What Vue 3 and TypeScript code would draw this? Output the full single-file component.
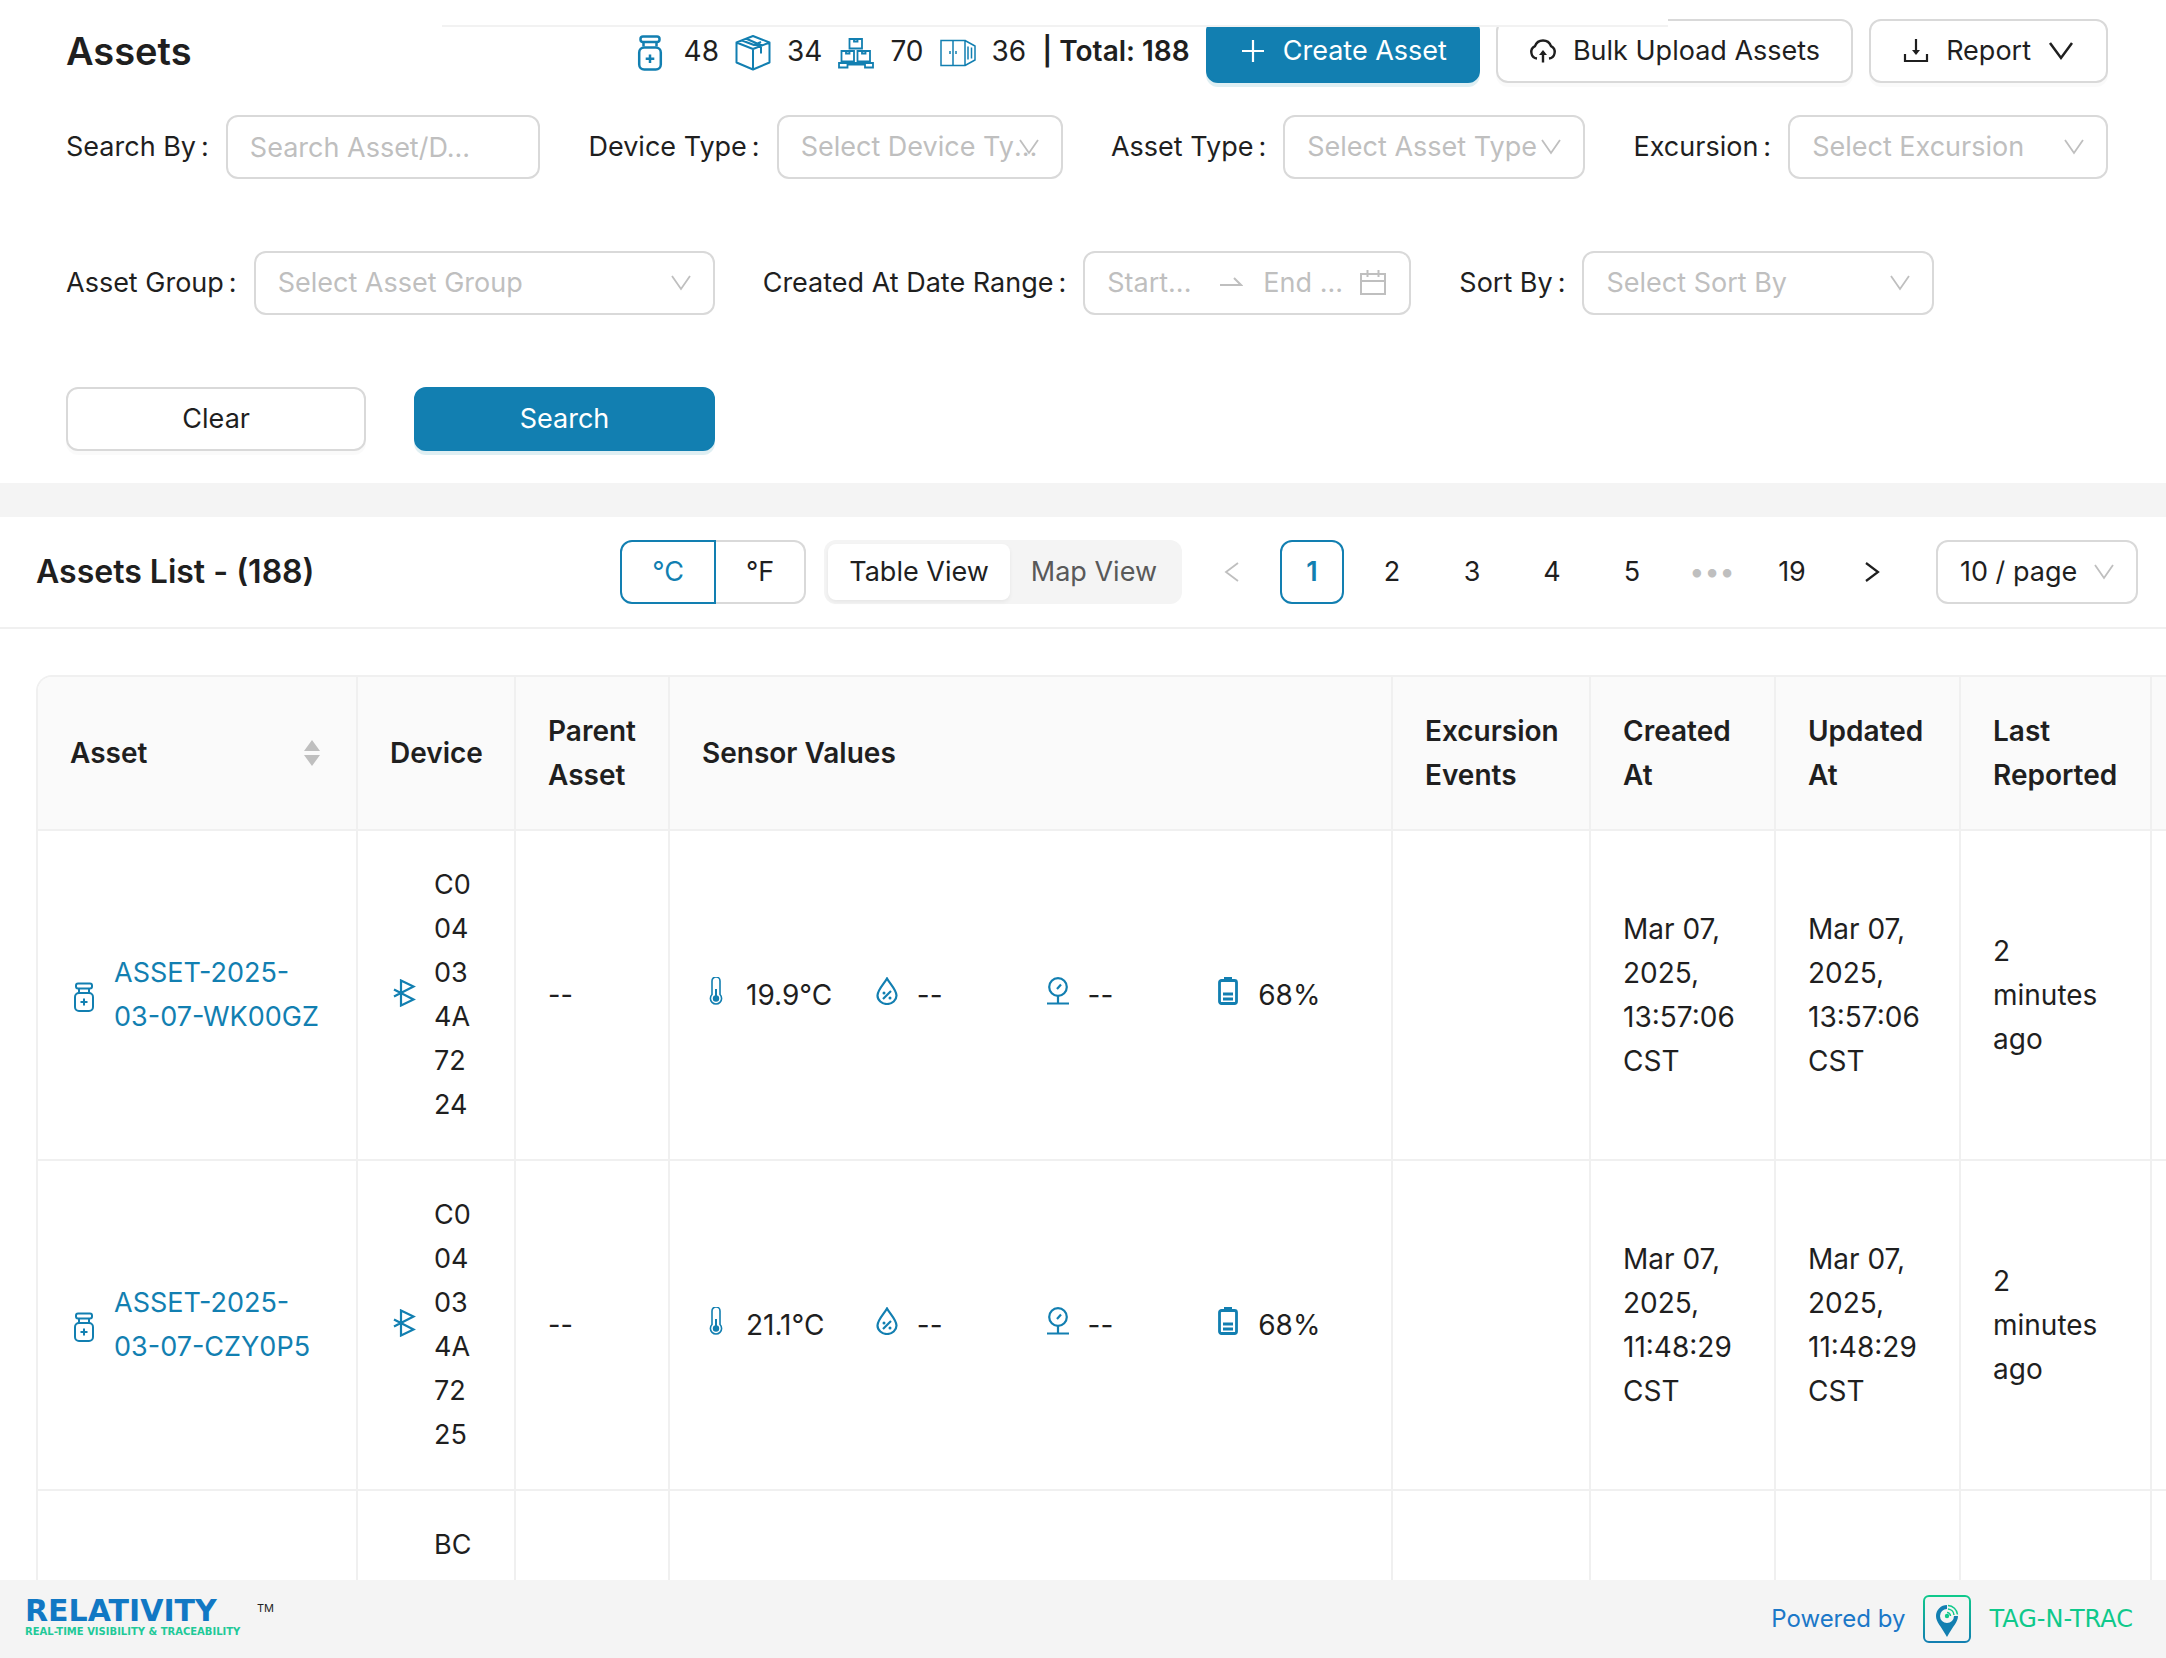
<script setup lang="ts">
import { ref } from 'vue'

interface FilterField {
  id: string
  label: string
  placeholder: string
  span: string
  kind: 'text' | 'select' | 'range'
}

interface AssetRow {
  name: string[]
  device: string[]
  parent: string
  temperature: string
  humidity: string
  pressure: string
  battery: string
  created: string[]
  updated: string[]
  reported: string[]
}

const filters: FilterField[] = [
  { id: 'search', label: 'Search By', placeholder: 'Search Asset/D...', span: 'span-6', kind: 'text' },
  { id: 'device-type', label: 'Device Type', placeholder: 'Select Device Type', span: 'span-6', kind: 'select' },
  { id: 'asset-type', label: 'Asset Type', placeholder: 'Select Asset Type', span: 'span-6', kind: 'select' },
  { id: 'excursion', label: 'Excursion', placeholder: 'Select Excursion', span: 'span-6', kind: 'select' },
  { id: 'asset-group', label: 'Asset Group', placeholder: 'Select Asset Group', span: 'span-8', kind: 'select' },
  { id: 'created-range', label: 'Created At Date Range', placeholder: '', span: 'span-8', kind: 'range' },
  { id: 'sort', label: 'Sort By', placeholder: 'Select Sort By', span: 'span-6', kind: 'select' },
]

const rows: AssetRow[] = [
  {
    name: ['ASSET-2025-', '03-07-WK00GZ'],
    device: ['C0', '04', '03', '4A', '72', '24'],
    parent: '--',
    temperature: '19.9°C',
    humidity: '--',
    pressure: '--',
    battery: '68%',
    created: ['Mar 07,', '2025,', '13:57:06', 'CST'],
    updated: ['Mar 07,', '2025,', '13:57:06', 'CST'],
    reported: ['2', 'minutes', 'ago'],
  },
  {
    name: ['ASSET-2025-', '03-07-CZY0P5'],
    device: ['C0', '04', '03', '4A', '72', '25'],
    parent: '--',
    temperature: '21.1°C',
    humidity: '--',
    pressure: '--',
    battery: '68%',
    created: ['Mar 07,', '2025,', '11:48:29', 'CST'],
    updated: ['Mar 07,', '2025,', '11:48:29', 'CST'],
    reported: ['2', 'minutes', 'ago'],
  },
]

const pages = ['1', '2', '3', '4', '5', '•••', '19']
const unit = ref('C')
const view = ref('table')
const page = ref('1')
</script>

<template>
  <div class="shell">
    <div class="top-strip"></div>
    <main class="content">
      <section class="filters">
        <div class="title-row">
          <h1>Assets</h1>
          <div class="stats">
            <svg class="stat-icon" viewBox="0 0 36 36" fill="none" stroke="currentColor" stroke-width="2.500">
              <rect x="8.500" y="1.500" width="19" height="5.500" rx="2.500" />
              <path d="M11.500 7v4.500M24.500 7v4.500" />
              <rect x="7.200" y="12.500" width="21.600" height="22" rx="5" />
              <path d="M18 19.500v8.500M13.700 23.700h8.600" />
            </svg>
            <span>48</span>
            <svg class="stat-icon" viewBox="0 0 36 36" fill="none" stroke="currentColor" stroke-width="2" stroke-linejoin="round">
              <path d="M18 1 34.500 7.500V27.500L18 34.500 1.500 27.500V7.500zM1.500 7.500 18 14 34.500 7.500M18 14v20M7 5.500l12 4.500h6.500L12 4M19 10l7-3M26 9v9.500" />
            </svg>
            <span>34</span>
            <svg class="stat-icon" viewBox="0 0 36 36" fill="none" stroke="currentColor" stroke-width="1.800">
              <path d="M11.500 4H24v9.500H11.500zM16 4v2.500h3.500V4M3.500 16H16v10.500H3.500zM8 16v2.500h3.500V16M19.500 16H32v10.500H19.500zM24 16v2.500h3.500V16M1 28h34v4.500h-8V29.500H9.500v3H1z" />
            </svg>
            <span>70</span>
            <svg class="stat-icon" viewBox="0 0 36 36" fill="none" stroke="currentColor" stroke-width="1.500">
              <path d="M1 5.500h24v25H1zM13 5.500v25M25 5.500 35 11v14l-10 5.500M10 16v3M16 16v3M28 11.500v13M31.500 12.500v11" />
            </svg>
            <span>36</span>
            <strong>| Total: 188</strong>
          </div>
          <button type="button" class="btn primary">
            <svg class="btn-icon" viewBox="0 0 28 28" fill="none" stroke="currentColor" stroke-width="2.200"><path d="M14 3v22M3 14h22" /></svg>
            Create Asset
          </button>
          <button type="button" class="btn">
            <svg class="btn-icon" viewBox="0 0 28 28" fill="none" stroke="currentColor" stroke-width="2.400">
              <path d="M8 21.500a6.500 6.500 0 0 1-2-12.300 8.500 8.500 0 0 1 16 0 6.500 6.500 0 0 1-2 12.300M14 25.500V15" />
              <path d="m10 18 4-5 4 5z" fill="currentColor" stroke="none" />
            </svg>
            Bulk Upload Assets
          </button>
          <button type="button" class="btn">
            <svg class="btn-icon" viewBox="0 0 28 28" fill="none" stroke="currentColor" stroke-width="2.200">
              <path d="M3 17v7h22v-7M14 2v13" />
              <path d="m10 13 4 5 4-5z" fill="currentColor" stroke="none" />
            </svg>
            Report
            <svg class="btn-icon" viewBox="0 0 28 28" fill="none" stroke="currentColor" stroke-width="2.500"><path d="m3 6 11 15L25 6" /></svg>
          </button>
        </div>

        <form class="filter-grid" @submit.prevent>
          <div v-for="f in filters" :key="f.id" class="field" :class="f.span">
            <label :for="f.id">{{ f.label }}<span class="colon">:</span></label>
            <input v-if="f.kind === 'text'" :id="f.id" class="box" type="text" :placeholder="f.placeholder" />
            <div v-else-if="f.kind === 'select'" class="select-wrap">
              <select :id="f.id" class="box muted">
                <option>{{ f.placeholder }}</option>
              </select>
              <svg class="chevron" viewBox="0 0 20 20" fill="none" stroke="currentColor" stroke-width="1.800"><path d="m1 3 9 13 9-13" /></svg>
            </div>
            <div v-else class="box range">
              <input :id="f.id" class="start" type="text" placeholder="Start..." />
              <svg class="arrow" viewBox="0 0 24 24" fill="none" stroke="currentColor" stroke-width="2"><path d="M1 14h21l-7-7" /></svg>
              <input class="end" type="text" placeholder="End ..." aria-label="End date" />
              <svg class="calendar" viewBox="0 0 28 28" fill="none" stroke="currentColor" stroke-width="2"><path d="M2 5h24v20H2zM2 12h24M8.500 1v7M19.500 1v7" /></svg>
            </div>
          </div>
          <button type="reset" class="btn span-4 new-row">Clear</button>
          <button type="submit" class="btn primary span-4">Search</button>
        </form>
      </section>

      <section class="list">
        <header class="list-head">
          <h2>Assets List - (188)</h2>
          <div class="units">
            <label :class="{ on: unit === 'C' }"><input v-model="unit" type="radio" name="unit" value="C" />°C</label>
            <label :class="{ on: unit === 'F' }"><input v-model="unit" type="radio" name="unit" value="F" />°F</label>
          </div>
          <div class="views">
            <label :class="{ on: view === 'table' }"><input v-model="view" type="radio" name="view" value="table" />Table View</label>
            <label :class="{ on: view === 'map' }"><input v-model="view" type="radio" name="view" value="map" />Map View</label>
          </div>
          <nav class="pager">
            <button type="button" class="page muted" aria-label="Previous page">
              <svg viewBox="0 0 20 20" fill="none" stroke="currentColor" stroke-width="1.800"><path d="M16 1 4 10l12 9" /></svg>
            </button>
            <button
              v-for="p in pages"
              :key="p"
              type="button"
              class="page"
              :class="{ current: p === page, dots: p === '•••' }"
              @click="page = p"
            >{{ p }}</button>
            <button type="button" class="page" aria-label="Next page">
              <svg viewBox="0 0 20 20" fill="none" stroke="currentColor" stroke-width="2.200"><path d="m4 1 12 9-12 9" /></svg>
            </button>
          </nav>
          <div class="select-wrap page-size">
            <select class="box" aria-label="Page size">
              <option>10 / page</option>
            </select>
            <svg class="chevron" viewBox="0 0 20 20" fill="none" stroke="currentColor" stroke-width="1.800"><path d="m1 3 9 13 9-13" /></svg>
          </div>
        </header>

        <div class="table-wrap">
          <table>
            <colgroup>
              <col class="c-asset" /><col class="c-device" /><col class="c-parent" /><col /><col class="c-exc" />
              <col class="c-date" /><col class="c-date" /><col class="c-last" /><col class="c-edge" />
            </colgroup>
            <thead>
              <tr>
                <th>
                  <div class="sortable">
                    Asset
                    <svg class="sorter" viewBox="0 0 16 28" fill="currentColor"><path d="M8 1l8 11H0zM8 27l8-11H0z" /></svg>
                  </div>
                </th>
                <th>Device</th>
                <th>Parent Asset</th>
                <th>Sensor Values</th>
                <th>Excursion Events</th>
                <th>Created<br />At</th>
                <th>Updated<br />At</th>
                <th>Last<br />Reported</th>
                <th></th>
              </tr>
            </thead>
            <tbody>
              <tr v-for="r in rows" :key="r.name[1]">
                <td>
                  <div class="asset">
                    <svg class="vial" viewBox="0 0 24 30" fill="none" stroke="currentColor" stroke-width="2">
                      <rect x="4" y="1.500" width="16" height="5" rx="2" />
                      <path d="M7 6.500V11M17 6.500V11" />
                      <rect x="3" y="11" width="18" height="18" rx="4" />
                      <path d="M12 16.500v7M8.500 20h7" />
                    </svg>
                    <a href="#"><span v-for="(l, i) in r.name" :key="i">{{ l }}</span></a>
                  </div>
                </td>
                <td>
                  <div class="device">
                    <svg class="bluetooth" viewBox="0 0 24 28" fill="none" stroke="currentColor" stroke-width="2.200"><path d="M2 10.500 21.500 20.500 9 26.500V1.500L21.500 7.500 2 17.500" /></svg>
                    <div><span v-for="(l, i) in r.device" :key="i">{{ l }}</span></div>
                  </div>
                </td>
                <td>{{ r.parent }}</td>
                <td class="reading">
                  <div class="sensors">
                    <div class="sensor">
                      <svg viewBox="0 0 28 28" fill="none" stroke="currentColor" stroke-width="1.600">
                        <path d="M10 17.500V4a4 4 0 0 1 8 0v13.500a5.600 5.600 0 1 1-8 0z" />
                        <path d="M14 12v8" stroke-width="2" />
                        <circle cx="14" cy="21.500" r="3.200" fill="currentColor" stroke="none" />
                      </svg>
                      {{ r.temperature }}
                    </div>
                    <div class="sensor">
                      <svg viewBox="0 0 28 28" fill="none" stroke="currentColor" stroke-width="2.200">
                        <path d="M14 1.500C11 7 4.500 13 4.500 18.500a9.500 8.500 0 0 0 19 0C23.500 13 17 7 14 1.500zM18 14l-8 8" />
                        <circle cx="11" cy="16" r="1.500" fill="currentColor" stroke="none" />
                        <circle cx="17" cy="21" r="1.500" fill="currentColor" stroke="none" />
                      </svg>
                      {{ r.humidity }}
                    </div>
                    <div class="sensor">
                      <svg viewBox="0 0 28 28" fill="none" stroke="currentColor" stroke-width="2.200">
                        <circle cx="14" cy="10" r="8.800" />
                        <path d="M14 19v7M3 26.500h22M13 12l4-4.500" />
                      </svg>
                      {{ r.pressure }}
                    </div>
                    <div class="sensor">
                      <svg viewBox="0 0 28 28" fill="none" stroke="currentColor" stroke-width="2.800">
                        <path d="M10 1.500h8" stroke-width="3" />
                        <rect x="5.500" y="3.500" width="17" height="23" rx="2" />
                        <path d="M9 17h10M9 22h10" />
                      </svg>
                      {{ r.battery }}
                    </div>
                  </div>
                </td>
                <td></td>
                <td class="reading"><span v-for="(l, i) in r.created" :key="i">{{ l }}</span></td>
                <td class="reading"><span v-for="(l, i) in r.updated" :key="i">{{ l }}</span></td>
                <td class="reading"><span v-for="(l, i) in r.reported" :key="i">{{ l }}</span></td>
                <td></td>
              </tr>
              <tr>
                <td></td>
                <td><div class="device partial">BC</div></td>
                <td></td><td></td><td></td><td></td><td></td><td></td><td></td>
              </tr>
            </tbody>
          </table>
        </div>
      </section>
    </main>

    <footer class="footer">
      <div class="brand">
        <div class="brand-name">RELATIVITY</div>
        <div class="brand-line">REAL-TIME VISIBILITY &amp; TRACEABILITY</div>
      </div>
      <span class="tm">TM</span>
      <span class="powered">Powered by</span>
      <svg class="pin" viewBox="0 0 48 48" fill="none">
        <defs>
          <linearGradient id="pin-frame" x1="0" y1="0" x2="0" y2="1">
            <stop offset="0" stop-color="#0fc98b" />
            <stop offset="1" stop-color="#127fb1" />
          </linearGradient>
        </defs>
        <rect x="1" y="1" width="46" height="46" rx="5" stroke="url(#pin-frame)" stroke-width="2" />
        <path d="M24 10a11 11 0 0 0-11 11c0 6 5 10 11 21 6-11 11-15 11-21H31a7 7 0 1 1-7-7z" fill="#127fb1" />
        <circle cx="24" cy="21" r="2.200" fill="#0fc98b" />
        <path d="M24 17.500a3.500 3.500 0 0 1 3.500 3.500M25 14a6.500 6.500 0 0 1 6 6M25 10.500a10 10 0 0 1 9.500 9" stroke="#0fc98b" stroke-width="1.500" />
      </svg>
      <span class="partner">TAG-N-TRAC</span>
    </footer>
  </div>
</template>

<style>
body {
  background: #fff;
}
</style>

<style scoped>
* {
  box-sizing: border-box;
}
.shell {
  position: relative;
  display: flex;
  flex-direction: column;
  height: 100vh;
  overflow: hidden;
  font-family: Inter, "Liberation Sans", sans-serif;
  font-size: 27px;
  line-height: 44px;
  color: #1f1f1f;
  background: #f4f4f4;
}
input,
select,
button {
  font: inherit;
  color: inherit;
  margin: 0;
}
.top-strip {
  position: absolute;
  top: 0;
  left: 442px;
  right: 498px;
  height: 27px;
  background: #fff;
  border-bottom: 2px solid #f2f2f2;
}
.content {
  flex: 1;
  min-height: 0;
  display: flex;
  flex-direction: column;
  gap: 34px;
  overflow: hidden;
}
.filters {
  flex: none;
  background: #fff;
  padding: 19px 58px 32px 66px;
}
.title-row {
  display: flex;
  align-items: center;
  gap: 16px;
}
h1 {
  margin: 0 auto 0 0;
  font-size: 38px;
  font-weight: 600;
}
.stats {
  display: flex;
  align-items: center;
  gap: 16px;
  font-size: 28px;
}
.stat-icon {
  width: 36px;
  height: 36px;
  margin-top: 4px;
  color: #127fb1;
}
strong {
  font-weight: 600;
}
.btn {
  display: flex;
  align-items: center;
  justify-content: center;
  gap: 16px;
  height: 64px;
  padding: 0 31px;
  border: 2px solid #d9d9d9;
  border-radius: 12px;
  background: #fff;
  box-shadow: 0 4px 0 rgba(0, 0, 0, 0.02);
  white-space: nowrap;
}
.btn.primary {
  border-color: #127fb1;
  background: #127fb1;
  color: #fff;
  box-shadow: 0 4px 0 #dfeff3;
}
.btn-icon {
  width: 28px;
  height: 28px;
}
.filter-grid {
  display: grid;
  grid-template-columns: repeat(24, minmax(0, 1fr));
  column-gap: 48px;
  row-gap: 72px;
  margin-top: 32px;
}
.span-4 {
  grid-column-end: span 4;
}
.span-6 {
  grid-column-end: span 6;
}
.span-8 {
  grid-column-end: span 8;
}
.new-row {
  grid-column-start: 1;
}
.field {
  display: flex;
  align-items: center;
  gap: 17px;
}
.field > label {
  flex: none;
}
.colon {
  margin-left: 5px;
}
.box {
  flex: 1;
  width: 100%;
  min-width: 0;
  height: 64px;
  padding: 0 22px;
  border: 2px solid #d9d9d9;
  border-radius: 12px;
  background: #fff;
  outline: none;
}
.muted {
  color: #bfbfbf;
}
::placeholder {
  color: #bfbfbf;
  opacity: 1;
}
.select-wrap {
  position: relative;
  flex: 1;
  min-width: 0;
}
select.box {
  display: block;
  appearance: none;
  text-overflow: ellipsis;
}
.chevron {
  position: absolute;
  right: 24px;
  top: 22px;
  width: 20px;
  height: 20px;
  color: #bfbfbf;
  pointer-events: none;
}
.range {
  display: flex;
  align-items: center;
  color: #bfbfbf;
}
.range input {
  min-width: 0;
  padding: 0;
  border: 0;
  outline: 0;
  background: none;
}
.range .start {
  flex: 1;
  width: 0;
}
.range .end {
  width: 96px;
}
.arrow {
  flex: none;
  width: 24px;
  height: 24px;
  margin-right: 20px;
}
.calendar {
  flex: none;
  width: 28px;
  height: 28px;
}
.list {
  flex: 1;
  min-height: 0;
  overflow: hidden;
  background: #fff;
}
.list-head {
  display: flex;
  align-items: center;
  height: 112px;
  padding: 0 28px 0 36px;
  border-bottom: 2px solid #f0f0f0;
}
h2 {
  margin: 0 auto 0 0;
  font-size: 32px;
  font-weight: 600;
}
.units,
.views {
  display: flex;
  height: 64px;
  margin-right: 18px;
}
.units label,
.views label {
  display: flex;
  align-items: center;
  position: relative;
}
.units input,
.views input {
  position: absolute;
  inset: 0;
  opacity: 0;
}
.units label {
  padding: 0 30px;
  border: 2px solid #d9d9d9;
}
.units label:first-child {
  border-radius: 12px 0 0 12px;
}
.units label:last-child {
  border-left: 0;
  border-radius: 0 12px 12px 0;
}
.units .on {
  color: #127fb1;
  border-color: #127fb1;
}
.views {
  padding: 4px;
  border-radius: 12px;
  background: #f4f4f4;
  color: #595959;
}
.views label {
  padding: 0 21px;
  border-radius: 8px;
}
.views .on {
  background: #fff;
  color: #1f1f1f;
  box-shadow: 0 2px 4px rgba(0, 0, 0, 0.06);
}
.pager {
  display: flex;
  gap: 16px;
  margin-right: 32px;
}
.page {
  display: flex;
  align-items: center;
  justify-content: center;
  width: 64px;
  height: 64px;
  padding: 0;
  border: 2px solid transparent;
  border-radius: 12px;
  background: none;
}
.page svg {
  width: 20px;
  height: 20px;
}
.page.muted,
.page.dots {
  color: #bfbfbf;
}
.page.current {
  border-color: #127fb1;
  color: #127fb1;
  font-weight: 600;
}
.page-size {
  flex: none;
  width: 202px;
}
.table-wrap {
  padding: 46px 0 0 36px;
}
table {
  width: 100%;
  table-layout: fixed;
  border-collapse: separate;
  border-spacing: 0;
  border-top: 2px solid #f0f0f0;
  border-left: 2px solid #f0f0f0;
  border-top-left-radius: 16px;
  overflow: hidden;
}
.c-asset {
  width: 320px;
}
.c-device {
  width: 158px;
}
.c-parent {
  width: 154px;
}
.c-exc {
  width: 198px;
}
.c-date {
  width: 185px;
}
.c-last {
  width: 191px;
}
.c-edge {
  width: 14px;
}
th,
td {
  padding: 32px;
  border-right: 2px solid #f0f0f0;
  border-bottom: 2px solid #f0f0f0;
  text-align: left;
  vertical-align: middle;
}
th {
  background: #fafafa;
  font-size: 28px;
  font-weight: 600;
}
th:last-child,
td:last-child {
  padding: 0;
  border-right: 0;
}
th:nth-child(8),
td:nth-child(8) {
  padding-right: 0;
}
td span {
  display: block;
  white-space: nowrap;
}
.reading {
  font-size: 28px;
}
.sortable {
  display: flex;
  align-items: center;
  justify-content: space-between;
}
.sorter {
  width: 16px;
  height: 28px;
  margin-right: 4px;
  color: #bfbfbf;
}
.asset {
  display: flex;
  align-items: center;
  gap: 18px;
}
.asset a {
  color: #127fb1;
  text-decoration: none;
}
.vial {
  flex: none;
  width: 24px;
  height: 30px;
  margin-top: 4px;
  margin-left: 2px;
  color: #127fb1;
}
.device {
  display: flex;
  align-items: center;
  gap: 18px;
}
.bluetooth {
  flex: none;
  width: 24px;
  height: 28px;
  margin-bottom: 4px;
  margin-left: 2px;
  color: #127fb1;
}
.partial {
  align-items: flex-start;
  height: 264px;
  padding-left: 44px;
}
.sensors {
  display: grid;
  grid-template-columns: repeat(4, minmax(0, 1fr));
  column-gap: 26px;
}
.sensor {
  display: flex;
  align-items: center;
  gap: 16px;
}
.sensor svg {
  flex: none;
  width: 28px;
  height: 28px;
  margin-bottom: 8px;
  color: #127fb1;
}
.footer {
  flex: none;
  display: flex;
  align-items: center;
  height: 78px;
  padding: 0 33px 0 25px;
  background: #f4f4f4;
}
.brand {
  min-width: 224px;
  font-family: "DejaVu Sans", sans-serif;
  font-weight: 700;
}
.brand-name {
  font-size: 30px;
  line-height: 26px;
  color: #1178c4;
}
.brand-line {
  font-size: 10px;
  line-height: 16px;
  color: #1fc998;
}
.tm {
  align-self: flex-start;
  margin: 18px auto 0 8px;
  font-size: 11px;
  line-height: 20px;
}
.powered {
  font-size: 24px;
  color: #1b78c8;
}
.pin {
  width: 48px;
  height: 48px;
  margin: 0 18px;
}
.partner {
  font-family: "DejaVu Sans", sans-serif;
  font-size: 24px;
  color: #0fc98b;
}
</style>
